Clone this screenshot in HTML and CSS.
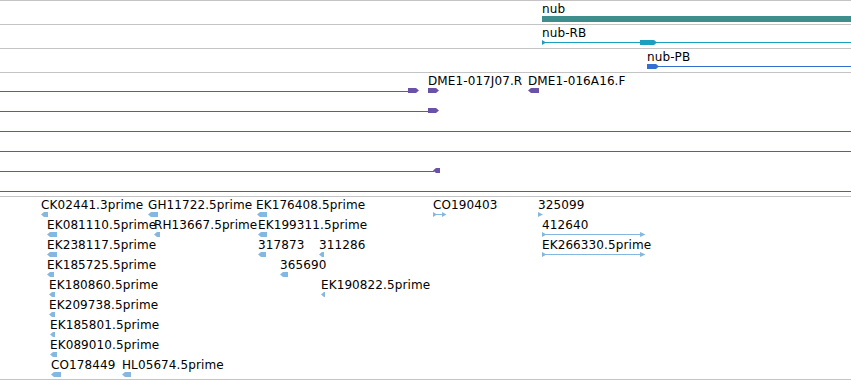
FILE: index.html
```html
<!DOCTYPE html>
<html lang="en">
<head>
    <meta charset="UTF-8">
    <title>nub region</title>
    <link rel="stylesheet" href="styles.css">
</head>
<body>
    <div class="tracks">
        <!-- gene -->
        <div class="track gene">
            <div class="row">
                <div class="feat" style="left:542px">
                    <span class="label">nub</span>
                    <div class="glyph bar" style="width:309px"></div>
                </div>
            </div>
        </div>

        <!-- transcript RB -->
        <div class="track rb">
            <div class="row">
                <div class="line" style="left:542px; right:0"></div>
                <div class="feat" style="left:542px">
                    <span class="label">nub-RB</span>
                    <div class="glyph tri fwd" style="width:4px"></div>
                </div>
                <div class="glyph box fwd solo" style="left:640px; width:17px"></div>
            </div>
        </div>

        <!-- transcript PB -->
        <div class="track pb">
            <div class="row">
                <div class="line" style="left:656px; right:0"></div>
                <div class="feat" style="left:647px">
                    <span class="label">nub-PB</span>
                    <div class="glyph box fwd" style="width:12px"></div>
                </div>
            </div>
        </div>

        <!-- clone ends -->
        <div class="track clones">
            <div class="row">
                <div class="line" style="left:0; width:409px"></div>
                <div class="glyph box fwd solo" style="left:408px; width:11px"></div>
                <div class="feat" style="left:428px">
                    <span class="label">DME1-017J07.R</span>
                    <div class="glyph box fwd" style="width:11px"></div>
                </div>
                <div class="feat" style="left:528px">
                    <span class="label">DME1-016A16.F</span>
                    <div class="glyph box rev" style="width:11px"></div>
                </div>
            </div>
            <div class="row">
                <div class="line" style="left:0; width:429px"></div>
                <div class="glyph box fwd solo" style="left:428px; width:11px"></div>
            </div>
            <div class="row">
                <div class="line" style="left:0; right:0"></div>
            </div>
            <div class="row">
                <div class="line" style="left:0; right:0"></div>
            </div>
            <div class="row">
                <div class="line" style="left:0; width:434px"></div>
                <div class="glyph box rev solo" style="left:433px; width:7px"></div>
            </div>
            <div class="row">
                <div class="line" style="left:0; right:0"></div>
            </div>
        </div>

        <!-- ESTs -->
        <div class="track ests">
            <div class="row">
                <div class="feat" style="left:41px"><span class="label">CK02441.3prime</span><div class="glyph box rev" style="width:7px"></div></div>
                <div class="feat" style="left:148px"><span class="label">GH11722.5prime</span><div class="glyph box rev" style="width:10px"></div></div>
                <div class="feat" style="left:256px"><span class="label">EK176408.5prime</span><div class="glyph box rev" style="width:10px; margin-left:1px"></div></div>
                <div class="feat" style="left:433px">
                    <span class="label">CO190403</span>
                    <svg class="span" width="14" height="5" viewBox="0 0 14 5"><path d="M0 0L4 2.5L0 5Z M9 0L13.5 2.5L9 5Z"/><rect x="3" y="2" width="7" height="1"/></svg>
                </div>
                <div class="feat" style="left:538px"><span class="label">325099</span><div class="glyph tri fwd" style="width:5px"></div></div>
            </div>
            <div class="row">
                <div class="feat" style="left:47px"><span class="label">EK081110.5prime</span><div class="glyph box rev" style="width:10px"></div></div>
                <div class="feat" style="left:154px"><span class="label">RH13667.5prime</span><div class="glyph box rev" style="width:6px"></div></div>
                <div class="feat" style="left:258px"><span class="label">EK199311.5prime</span><div class="glyph box rev" style="width:9px"></div></div>
                <div class="feat" style="left:542px">
                    <span class="label">412640</span>
                    <svg class="span" width="104" height="5" viewBox="0 0 104 5"><path d="M0 0L4.5 2.5L0 5Z M98 0L103.5 2.5L98 5Z"/><rect x="3" y="2" width="96" height="1"/></svg>
                </div>
            </div>
            <div class="row">
                <div class="feat" style="left:47px"><span class="label">EK238117.5prime</span><div class="glyph box rev" style="width:10px"></div></div>
                <div class="feat" style="left:258px"><span class="label">317873</span><div class="glyph box rev" style="width:8px"></div></div>
                <div class="feat" style="left:319px"><span class="label">311286</span><div class="glyph box rev" style="width:5px"></div></div>
                <div class="feat" style="left:542px">
                    <span class="label">EK266330.5prime</span>
                    <svg class="span" width="104" height="5" viewBox="0 0 104 5"><path d="M0 0L4.5 2.5L0 5Z M98 0L103.5 2.5L98 5Z"/><rect x="3" y="2" width="96" height="1"/></svg>
                </div>
            </div>
            <div class="row">
                <div class="feat" style="left:47px"><span class="label">EK185725.5prime</span><div class="glyph box rev" style="width:7px"></div></div>
                <div class="feat" style="left:280px"><span class="label">365690</span><div class="glyph box rev" style="width:8px"></div></div>
            </div>
            <div class="row">
                <div class="feat" style="left:49px"><span class="label">EK180860.5prime</span><div class="glyph box rev" style="width:6px"></div></div>
                <div class="feat" style="left:321px"><span class="label">EK190822.5prime</span><div class="glyph box rev" style="width:4px"></div></div>
            </div>
            <div class="row">
                <div class="feat" style="left:49px"><span class="label">EK209738.5prime</span><div class="glyph box rev" style="width:6px"></div></div>
            </div>
            <div class="row">
                <div class="feat" style="left:50px"><span class="label">EK185801.5prime</span><div class="glyph box rev" style="width:5px"></div></div>
            </div>
            <div class="row">
                <div class="feat" style="left:50px"><span class="label">EK089010.5prime</span><div class="glyph box rev" style="width:7px"></div></div>
            </div>
            <div class="row">
                <div class="feat" style="left:51px"><span class="label">CO178449</span><div class="glyph box rev" style="width:10px"></div></div>
                <div class="feat" style="left:122px"><span class="label">HL05674.5prime</span><div class="glyph box rev" style="width:9px"></div></div>
            </div>
        </div>
    </div>
</body>
</html>
```

FILE: styles.css
```css
body {
    margin: 0;
    background: #ffffff;
    font-family: "DejaVu Sans", sans-serif;
    font-size: 12px;
    color: #000000;
}
.tracks {
    width: 851px;
    overflow: hidden;
}
.track {
    box-sizing: border-box;
    border-top: 1px solid #c4c4c4;
    padding-top: 1px;
    overflow: hidden;
}
.track.gene, .track.rb, .track.pb {
    height: 24px;
}
.track.clones {
    height: 124px;
}
.track.ests {
    height: 184px;
    border-bottom: 1px solid #c4c4c4;
}
.row {
    position: relative;
    height: 20px;
}
.feat {
    position: absolute;
    top: 0;
}
.label {
    display: block;
    line-height: 14px;
    letter-spacing: 0.1px;
    white-space: nowrap;
}
.glyph {
    height: 5px;
    background: currentColor;
}
.glyph.solo {
    position: absolute;
    top: 14px;
}
.glyph.bar {
    height: 6px;
}
.line {
    position: absolute;
    top: 17px;
    height: 1px;
    background: currentColor;
}
.box.fwd {
    clip-path: polygon(0 0, calc(100% - 3px) 0, 100% 50%, calc(100% - 3px) 100%, 0 100%);
}
.box.rev {
    clip-path: polygon(3px 0, 100% 0, 100% 100%, 3px 100%, 0 50%);
}
.tri.fwd {
    clip-path: polygon(0 0, 100% 50%, 0 100%);
}
.span {
    display: block;
    fill: currentColor;
}

/* track colours */
.gene .glyph { color: #3f8e8e; }
.rb { color: #1a9fc0; }
.rb .line { top: 16px; }
.pb { color: #3470d0; }
.pb .line { top: 16px; }
.clones .line, .clones .glyph { color: #6a52a8; }
.ests .glyph, .ests .span { color: #84b8e0; }
.label { color: #000000; }
```
